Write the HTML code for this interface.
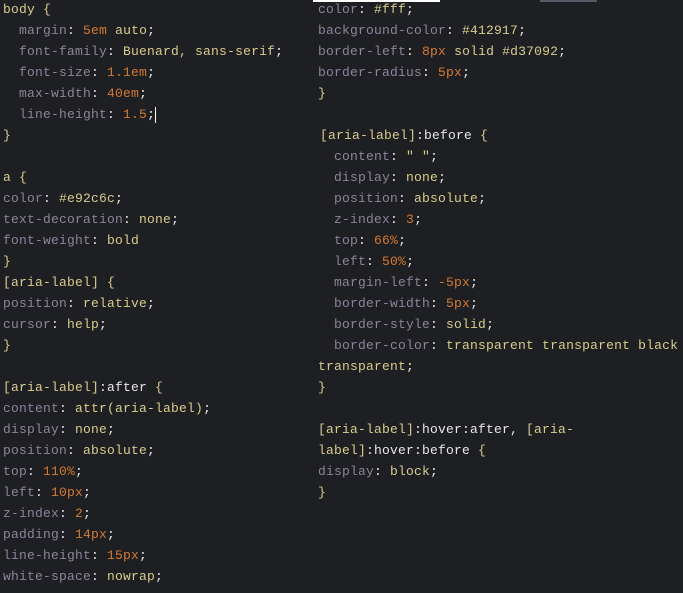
<!DOCTYPE html>
<html><head><meta charset="utf-8"><style>
html,body{margin:0;padding:0;background:#1e1f23;width:683px;height:593px;overflow:hidden;position:relative}
pre{position:absolute;margin:0;font-family:"Liberation Mono",monospace;font-size:13px;letter-spacing:0.2px;line-height:21px;color:#e8e8e8;white-space:pre}
.p{color:#8e8398}.v{color:#d9cc8c}.n{color:#d47b2c}.s{color:#d9cc8c}.w{color:#eeeeee}
#l{left:3px;top:-1px}#r{left:318px;top:-1px}
.cur{display:inline-block;width:1px;height:16px;background:#fff;vertical-align:middle}
</style></head><body>
<div style="position:absolute;left:313px;top:0;width:127px;height:2px;background:#fff"></div>
<div style="position:absolute;left:540px;top:0;width:57px;height:2px;background:#555a66"></div>
<pre id="l"><span class="s">body {</span>
  <span class="p">margin</span>: <span class="n">5em</span> <span class="v">auto</span>;
  <span class="p">font-family</span>: <span class="v">Buenard, sans-serif</span>;
  <span class="p">font-size</span>: <span class="n">1.1em</span>;
  <span class="p">max-width</span>: <span class="n">40em</span>;
  <span class="p">line-height</span>: <span class="n">1.5</span>;<span class="cur"></span>
<span class="s">}</span>

<span class="s">a {</span>
<span class="p">color</span>: <span class="v">#e92c6c</span>;
<span class="p">text-decoration</span>: <span class="v">none</span>;
<span class="p">font-weight</span>: <span class="v">bold</span>
<span class="s">}</span>
<span class="s">[aria-label] {</span>
<span class="p">position</span>: <span class="v">relative</span>;
<span class="p">cursor</span>: <span class="v">help</span>;
<span class="s">}</span>

<span class="s">[aria-label]</span>:after <span class="s">{</span>
<span class="p">content</span>: <span class="v">attr(aria-label)</span>;
<span class="p">display</span>: <span class="v">none</span>;
<span class="p">position</span>: <span class="v">absolute</span>;
<span class="p">top</span>: <span class="n">110%</span>;
<span class="p">left</span>: <span class="n">10px</span>;
<span class="p">z-index</span>: <span class="n">2</span>;
<span class="p">padding</span>: <span class="n">14px</span>;
<span class="p">line-height</span>: <span class="n">15px</span>;
<span class="p">white-space</span>: <span class="v">nowrap</span>;</pre>
<pre id="r"><span class="p">color</span>: <span class="v">#fff</span>;
<span class="p">background-color</span>: <span class="v">#412917</span>;
<span class="p">border-left</span>: <span class="n">8px</span> <span class="v">solid #d37092</span>;
<span class="p">border-radius</span>: <span class="n">5px</span>;
<span class="s">}</span>

<span style="margin-left:2px"><span class="s">[aria-label]</span>:before <span class="s">{</span></span>
  <span class="p">content</span>: <span class="v">" "</span>;
  <span class="p">display</span>: <span class="v">none</span>;
  <span class="p">position</span>: <span class="v">absolute</span>;
  <span class="p">z-index</span>: <span class="n">3</span>;
  <span class="p">top</span>: <span class="n">66%</span>;
  <span class="p">left</span>: <span class="n">50%</span>;
  <span class="p">margin-left</span>: <span class="n">-5px</span>;
  <span class="p">border-width</span>: <span class="n">5px</span>;
  <span class="p">border-style</span>: <span class="v">solid</span>;
  <span class="p">border-color</span>: <span class="v">transparent transparent black</span>
<span class="v">transparent</span>;
<span class="s">}</span>

<span class="s">[aria-label]</span>:hover:after, <span class="s">[aria-</span>
<span class="s">label]</span>:hover:before <span class="s">{</span>
<span class="p">display</span>: <span class="v">block</span>;
<span class="s">}</span></pre>
</body></html>
